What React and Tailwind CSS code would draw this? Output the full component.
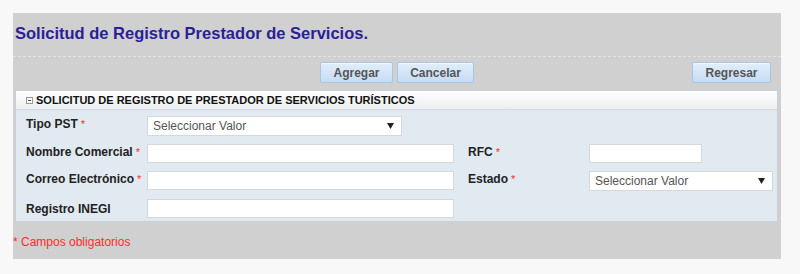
import React from 'react';

const Req = () => <span className="ml-[3px] text-[11px] font-normal text-[#ff2b2b]">*</span>;

const Label = ({ children, req }) => (
  <div className="text-[12px] font-bold leading-[14px] text-[#222]">
    {children}
    {req && <Req />}
  </div>
);

const TextInput = ({ w }) => (
  <input
    type="text"
    className={`block h-[19px] ${w} border border-[#d4d8dc] bg-white outline-none`}
  />
);

const Select = ({ w }) => (
  <div
    className={`flex h-[20px] ${w} items-center justify-between border border-[#d4d8dc] bg-white pl-[5px] pr-[7px] text-[12px] leading-[14px] text-[#555]`}
  >
    <span>Seleccionar Valor</span>
    <svg width="7" height="6" viewBox="0 0 7 6">
      <path d="M0 0H7L3.5 6Z" fill="#222" />
    </svg>
  </div>
);

const Btn = ({ children, w }) => (
  <button
    className={`block h-[21px] ${w} rounded-[2px] border border-[#a7c6e6] bg-gradient-to-b from-[#e2eefa] to-[#c5dcf3] text-[12px] font-bold leading-[14px] text-[#555] shadow-[inset_0_1px_0_#f2f8fe]`}
  >
    {children}
  </button>
);

export default function App() {
  return (
    <div
      className="h-[274px] w-[800px] bg-[#f8f8f8] pt-[13px] pl-[13px]"
      style={{ fontFamily: '"Liberation Sans", Arial, sans-serif' }}
    >
      <div className="h-[246px] w-[768px] bg-[#d0d0d0]">
        {/* title */}
        <div className="h-[44px] border-b border-dashed border-[#e2e2e2] pl-[2px] pt-[10px]">
          <h1 className="text-[16.5px] font-bold leading-[20px] text-[#2a1f99]">
            Solicitud de Registro Prestador de Servicios.
          </h1>
        </div>

        {/* buttons */}
        <div className="grid grid-cols-[1fr_auto_1fr] items-center px-[10px] pt-[5px]">
          <div />
          <div className="flex gap-[4px]">
            <Btn w="w-[73px]">Agregar</Btn>
            <Btn w="w-[77px]">Cancelar</Btn>
          </div>
          <div className="flex justify-end">
            <Btn w="w-[79px]">Regresar</Btn>
          </div>
        </div>

        {/* form panel */}
        <div className="ml-[2px] mr-[3px] mt-[7px] h-[132px] border border-[#c9d0d7] bg-[#e1e9f1]">
          <div className="flex h-[19px] items-center border-b border-[#d3d9df] bg-gradient-to-b from-white to-[#eceef0] pl-[10px]">
            <span className="mr-[3px] flex h-[7px] w-[7px] items-center justify-center border border-[#999] bg-white">
              <span className="h-px w-[3px] bg-[#555]" />
            </span>
            <span className="text-[11px] font-bold text-[#111]">
              SOLICITUD DE REGISTRO DE PRESTADOR DE SERVICIOS TURÍSTICOS
            </span>
          </div>

          <div className="grid grid-cols-[121px_321px_121px_auto] gap-y-[8px] pl-[10px] pt-[6px]">
            <div className="pt-[1px]"><Label req>Tipo PST</Label></div>
            <div><Select w="w-[255px]" /></div>
            <div />
            <div />

            <div className="pt-[1px]"><Label req>Nombre Comercial</Label></div>
            <div><TextInput w="w-[307px]" /></div>
            <div className="pt-[1px]"><Label req>RFC</Label></div>
            <div><TextInput w="w-[113px]" /></div>

            <div className="pt-[1px]"><Label req>Correo Electrónico</Label></div>
            <div><TextInput w="w-[307px]" /></div>
            <div className="pt-[1px]"><Label req>Estado</Label></div>
            <div><Select w="w-[184px]" /></div>

            <div className="pt-[3px]"><Label>Registro INEGI</Label></div>
            <div><TextInput w="w-[307px]" /></div>
            <div />
            <div />
          </div>
        </div>

        <div className="pt-[13px] text-[12px] leading-[14px] text-[#ff2b2b]">
          * Campos obligatorios
        </div>
      </div>
    </div>
  );
}
